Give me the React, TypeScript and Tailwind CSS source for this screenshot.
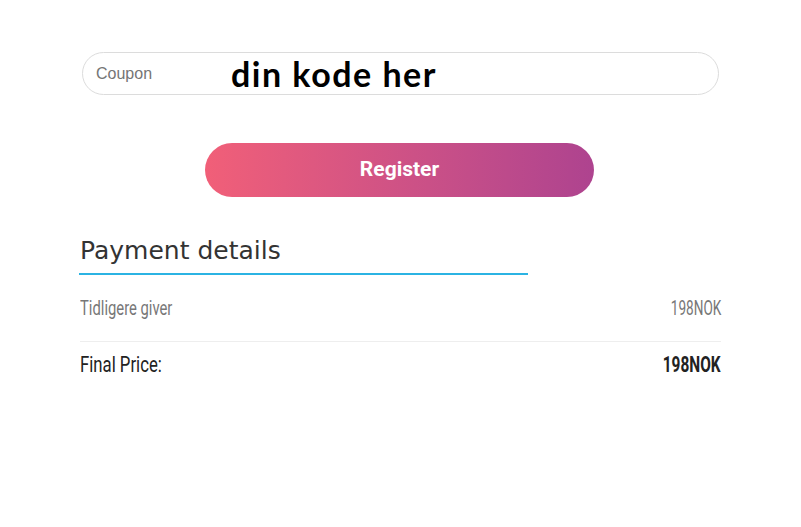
import React from 'react';

const cond = { fontFamily: 'Roboto, "Liberation Sans", sans-serif' };

const App = () => {
  return (
    <div className="w-[801px] h-[527px] bg-white" style={{ fontFamily: '"Liberation Sans", Arial, sans-serif' }}>
      <div className="pt-[52px] px-[82px]">
        <div className="relative h-[43px] rounded-full border border-[#dcdcdc] flex items-center pl-[13px]">
          <span className="text-[16px] text-[#757575]">Coupon</span>
          <span
            className="absolute left-[148px] top-[1px] text-[34px] font-bold text-black leading-[40px] tracking-[1.5px]"
            style={{ fontFamily: 'Lato, "Noto Sans", sans-serif' }}
          >
            din kode her
          </span>
        </div>
      </div>

      <div className="flex justify-center pt-[48px] pr-[2px]">
        <button
          className="w-[389px] h-[54px] rounded-full bg-gradient-to-r from-[#f15f78] to-[#ae438f] text-white text-[21px] font-bold"
          style={{ fontFamily: 'Roboto, sans-serif' }}
        >
          Register
        </button>
      </div>

      <div className="px-[80px] pt-[39px]">
        <div className="w-[449px] border-b-2 border-[#2bb3e3] pb-[7px] -ml-[1px] pl-[1px]">
          <h2 className="text-[25px] text-[#333] leading-[30px]" style={{ fontFamily: '"DejaVu Sans", Verdana, sans-serif' }}>
            Payment details
          </h2>
        </div>

        <div className="flex justify-between items-center h-[67px] border-b border-[#eeeeee] text-[20px] text-[#777]" style={cond}>
          <span className="inline-block origin-left scale-x-[0.74]">Tidligere giver</span>
          <span className="inline-block origin-right scale-x-[0.68]">198NOK</span>
        </div>
        <div className="flex justify-between items-center h-[45px] text-[22px] text-[#222]" style={cond}>
          <span className="inline-block origin-left scale-x-[0.76]">Final Price:</span>
          <span className="inline-block origin-right scale-x-[0.7] font-bold">198NOK</span>
        </div>
      </div>
    </div>
  );
};

export default App;
